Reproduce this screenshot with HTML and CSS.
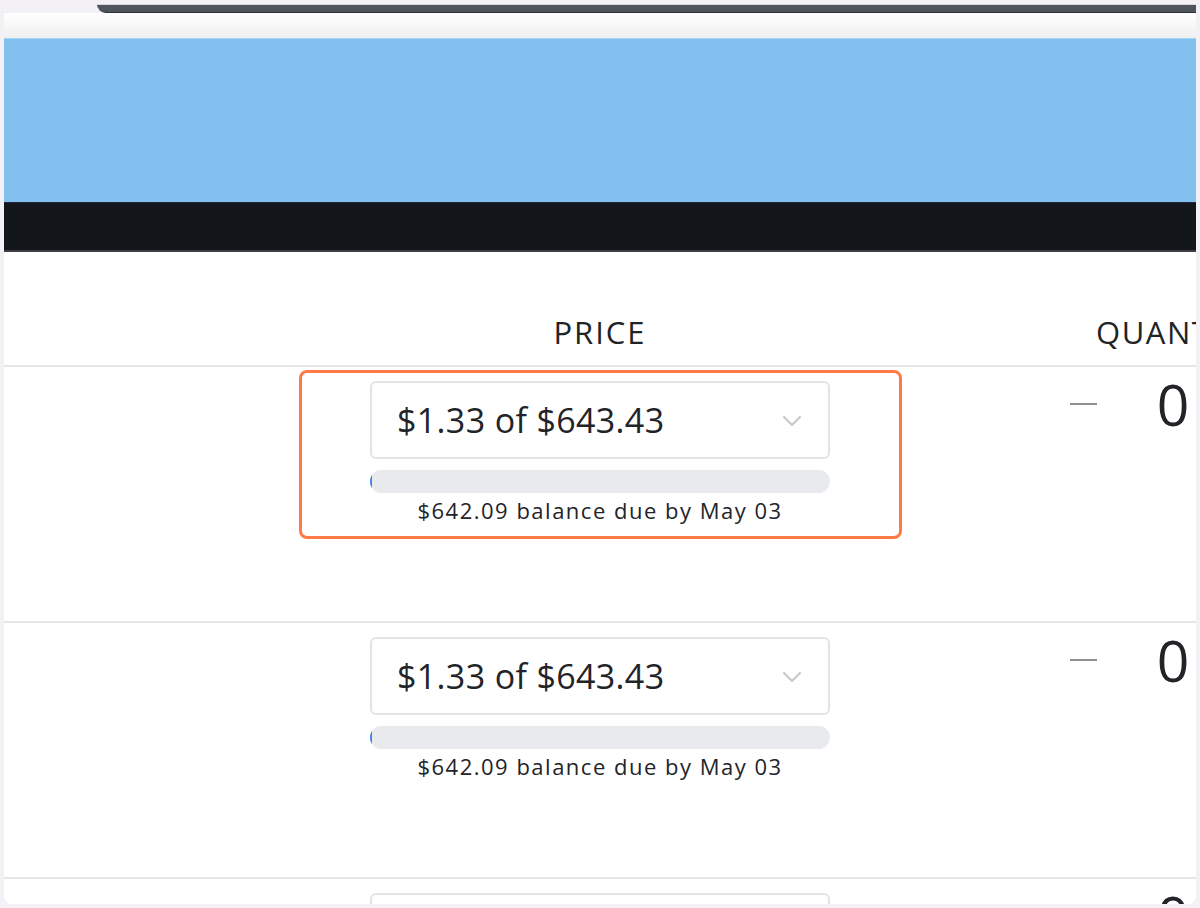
FILE: index.html
```html
<!DOCTYPE html>
<html lang="en">
<head>
<meta charset="utf-8">
<title>Cart</title>
<link rel="stylesheet" href="styles.css">
</head>
<body>
<div class="frame">
  <div class="chrome">
    <div class="chrome-tab"></div>
  </div>
  <div class="strip"></div>
  <div class="hero"></div>
  <div class="nav"></div>
  <div class="table">
    <div class="head">
      <div class="cell"></div>
      <div class="cell th">Price</div>
      <div class="cell th th-qty">Quantity</div>
    </div>
    <div class="row">
      <div class="cell"></div>
      <div class="cell price">
        <div class="select">
          <span>$1.33 of $643.43</span>
          <svg class="chev" width="20" height="12" viewBox="0 0 20 12"><path d="M2 2 L10 10 L18 2" fill="none" stroke="#c9c9c9" stroke-width="2.2" stroke-linecap="round" stroke-linejoin="round"/></svg>
        </div>
        <div class="progress"><div class="fill" style="width:0.21%"></div></div>
        <div class="due">$642.09 balance due by May 03</div>
      </div>
      <div class="cell qty">
        <span class="minus"></span>
        <span class="num">0</span>
        <span class="plus">+</span>
      </div>
    </div>
    <div class="row">
      <div class="cell"></div>
      <div class="cell price">
        <div class="select">
          <span>$1.33 of $643.43</span>
          <svg class="chev" width="20" height="12" viewBox="0 0 20 12"><path d="M2 2 L10 10 L18 2" fill="none" stroke="#c9c9c9" stroke-width="2.2" stroke-linecap="round" stroke-linejoin="round"/></svg>
        </div>
        <div class="progress"><div class="fill" style="width:0.21%"></div></div>
        <div class="due">$642.09 balance due by May 03</div>
      </div>
      <div class="cell qty">
        <span class="minus"></span>
        <span class="num">0</span>
        <span class="plus">+</span>
      </div>
    </div>
    <div class="row">
      <div class="cell"></div>
      <div class="cell price">
        <div class="select">
          <span>$1.33 of $643.43</span>
          <svg class="chev" width="20" height="12" viewBox="0 0 20 12"><path d="M2 2 L10 10 L18 2" fill="none" stroke="#c9c9c9" stroke-width="2.2" stroke-linecap="round" stroke-linejoin="round"/></svg>
        </div>
        <div class="progress"><div class="fill" style="width:0.21%"></div></div>
        <div class="due">$642.09 balance due by May 03</div>
      </div>
      <div class="cell qty">
        <span class="minus"></span>
        <span class="num">0</span>
        <span class="plus">+</span>
      </div>
    </div>
  </div>
  <div class="highlight"></div>
</div>
</body>
</html>
```
FILE: styles.css
```css
html, body {
  margin: 0;
  padding: 0;
  height: 908px;
  overflow: hidden;
  background: #f3f1f6;
  font-family: "Open Sans", "Noto Sans", sans-serif;
  color: #232427;
}

.frame {
  position: relative;
  margin: 0 4px;
  height: 904px;
  background: #ffffff;
  border-radius: 0 0 8px 8px;
  overflow: hidden;
}

.chrome {
  height: 13px;
  background: #f3f1f6;
  display: flex;
  justify-content: flex-end;
  align-items: flex-end;
}

.chrome-tab {
  width: 1099px;
  height: 9px;
  background: #50545c;
  border-top: 1px solid #d9d8de;
  border-bottom: 1px solid #2f3237;
  border-bottom-left-radius: 12px;
  box-sizing: border-box;
}

.strip {
  height: 25px;
  background: linear-gradient(#ffffff, #efefef);
}

.hero {
  height: 164px;
  background: #82c0ef;
  border-top: 1px solid #a6d3f5;
  box-sizing: border-box;
}

.nav {
  height: 50px;
  background: #121519;
  border-top: 1px solid #1f2a36;
  border-bottom: 2px solid #3e3f42;
  box-sizing: border-box;
}

.table {
  display: flex;
  flex-direction: column;
}

.head,
.row {
  display: grid;
  grid-template-columns: 296px 600px 542px;
  width: 1438px;
}

.head {
  height: 113px;
  border-bottom: 2px solid #e6e7e8;
  align-items: end;
}

.th {
  text-align: center;
  font-size: 31px;
  line-height: 40px;
  letter-spacing: 2px;
  text-transform: uppercase;
  padding-bottom: 13px;
  color: #222326;
}

.th-qty {
  letter-spacing: 1.5px;
  padding-left: 12px;
}

.row {
  height: 254px;
  border-bottom: 2px solid #e6e7e8;
  box-sizing: content-box;
}

.price {
  display: flex;
  flex-direction: column;
  align-items: center;
  padding-top: 14px;
}

.select {
  width: 460px;
  height: 78px;
  box-sizing: border-box;
  border: 2px solid #e3e4e6;
  border-radius: 6px;
  display: flex;
  align-items: center;
  justify-content: space-between;
  padding: 0 26px 0 25px;
  font-size: 34px;
  letter-spacing: 0.35px;
  color: #232427;
}

.chev {
  display: block;
  margin-top: 2px;
}

.progress {
  width: 460px;
  height: 23px;
  margin-top: 11px;
  background: #e9eaee;
  border-radius: 12px;
  overflow: hidden;
}

.fill {
  height: 100%;
  min-width: 2px;
  background: #3b82f6;
}

.due {
  margin-top: 3px;
  font-size: 22px;
  line-height: 28px;
  letter-spacing: 1.5px;
  color: #232427;
}

.qty {
  display: flex;
  justify-content: center;
  align-items: center;
  gap: 60px;
  height: 76px;
  margin-top: -1px;
}

.minus {
  display: block;
  width: 27px;
  height: 2px;
  background: #8e8f92;
}

.num {
  font-size: 57px;
  line-height: 76px;
  color: #232427;
}

.plus {
  font-size: 40px;
  color: #8e8f92;
}

.highlight {
  position: absolute;
  left: 295px;
  top: 370px;
  width: 603px;
  height: 169px;
  box-sizing: border-box;
  border: 3px solid #ff7a45;
  border-radius: 8px;
  pointer-events: none;
}
```
